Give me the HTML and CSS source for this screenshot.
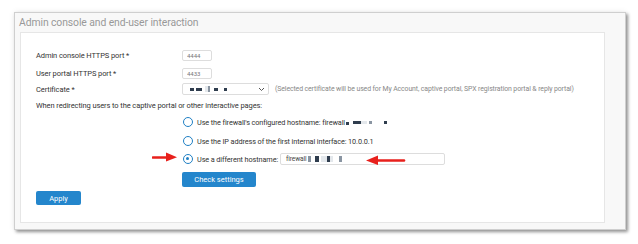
FILE: index.html
```html
<!DOCTYPE html>
<html lang="en">
<head>
  <meta charset="UTF-8" />
  <title>Admin console and end-user interaction</title>
  <link rel="stylesheet" href="styles.css">
</head>
<body>
  <section class="panel">
    <h2 class="panel-title">Admin console and end-user interaction</h2>
    <div class="panel-body">
      <div class="row row-first">
        <label class="label">Admin console HTTPS port *</label>
        <input class="port" type="text" value="4444">
      </div>
      <div class="row row-second">
        <label class="label">User portal HTTPS port *</label>
        <input class="port" type="text" value="4433">
      </div>
      <div class="row row-cert">
        <label class="label">Certificate *</label>
        <div class="select">
          <span class="blk d w4"></span><span class="blk d w6 gap2"></span><span class="blk l w3 gap3 tall"></span><span class="blk m w2 tall"></span><span class="blk d w4 gap4"></span><span class="blk d w3 gap6"></span>
          <svg class="caret" width="7" height="5" viewBox="0 0 7 5"><path d="M1 1l2.5 2.5L6 1" fill="none" stroke="#555" stroke-width="1"/></svg>
        </div>
        <span class="hint">(Selected certificate will be used for My Account, captive portal, SPX registration portal &amp; reply portal)</span>
      </div>
      <p class="note">When redirecting users to the captive portal or other interactive pages:</p>
      <div class="radio-row row-r1">
        <span class="radio"></span>
        <span class="radio-text">Use the firewall's configured hostname: firewall</span>
        <span class="blk d w3 low"></span><span class="blk d w8 gap4"></span><span class="blk l w6"></span><span class="blk m w3 gap2"></span><span class="blk d w3 gap12"></span>
      </div>
      <div class="radio-row row-r2">
        <span class="radio"></span>
        <span class="radio-text">Use the IP address of the first internal interface: 10.0.0.1</span>
      </div>
      <div class="radio-row row-r3">
        <span class="radio checked"></span>
        <span class="radio-text">Use a different hostname:</span>
        <div class="hostname">
          firewall<span class="blk m w3 tall gap1"></span><span class="blk d w4 tall gap4"></span><span class="blk l w6 tall gap2"></span><span class="blk d w3 tall"></span><span class="blk l w3 tall"></span><span class="blk m w3 tall gap6"></span>
        </div>
      </div>
      <button class="btn btn-check">Check settings</button>
      <button class="btn btn-apply">Apply</button>
    </div>
  </section>

  <!-- annotation arrows drawn over the screenshot -->
  <svg class="arrow arrow-left" width="28" height="12" viewBox="0 0 28 12">
    <path d="M1 6.5h15" stroke="#e8201c" stroke-width="2.6" stroke-linecap="round"/>
    <path d="M14 1.5L25 6.2L14 10.5z" fill="#e8201c"/>
  </svg>
  <svg class="arrow arrow-right" width="42" height="12" viewBox="0 0 42 12">
    <path d="M12 6.5h28" stroke="#e8201c" stroke-width="2.6" stroke-linecap="round"/>
    <path d="M14 1.5L2 6.5L14 11z" fill="#e8201c"/>
  </svg>
</body>
</html>
```

FILE: styles.css
```css
body {
  margin: 0;
  background: #fff;
  font-family: Roboto, "Liberation Sans", sans-serif;
  color: #333;
  position: relative;
  width: 638px;
  height: 244px;
  overflow: hidden;
}
.panel {
  box-sizing: border-box;
  margin: 12px 0 0 14px;
  width: 612px;
  height: 218px;
  background: #f8f8f8;
  border: 1px solid #cfcfcf;
  box-shadow: 2px 2px 3px rgba(0, 0, 0, 0.4), 0 0 6px rgba(0, 0, 0, 0.08);
  display: flex;
  flex-direction: column;
}
.panel-title {
  margin: 0;
  height: 19px;
  line-height: 19px;
  padding-left: 4px;
  font-size: 10.4px;
  font-weight: normal;
  color: #999;
  letter-spacing: -0.1px;
}
.panel-body {
  box-sizing: border-box;
  margin: 0 20px 0 5px;
  height: 191px;
  background: #fff;
  border: 1px solid #e6e6e6;
  padding: 16px 0 0 15px;
  display: flex;
  flex-direction: column;
  align-items: flex-start;
  font-size: 7.3px;
  letter-spacing: -0.1px;
}
.row {
  display: flex;
  align-items: center;
  height: 12px;
}
.row-second { margin-top: 6px; }
.row-cert { margin-top: 4px; }
.label {
  width: 146px;
  flex: none;
  font-size: 7.5px;
}
.port {
  box-sizing: border-box;
  width: 30px;
  height: 11px;
  border: 1px solid #ddd;
  border-radius: 2px;
  font: inherit;
  font-size: 6px;
  color: #777;
  padding: 0 0 0 4px;
  outline: none;
}
.select {
  box-sizing: border-box;
  width: 87px;
  height: 12px;
  border: 1px solid #ddd;
  border-radius: 2px;
  display: flex;
  align-items: center;
  padding-left: 7px;
  position: relative;
}
.caret {
  position: absolute;
  right: 3px;
  top: 3px;
}
.hint {
  margin-left: 6px;
  color: #888;
  font-size: 6.9px;
}
.blk {
  display: inline-block;
  height: 3px;
  flex: none;
}
.blk.tall { height: 6px; }
.blk.low { align-self: flex-end; margin-bottom: 3px; }
.d { background: #2f3d4e; }
.m { background: #8a95a2; }
.l { background: #e4e8ec; }
.w2 { width: 2px; }
.w3 { width: 3px; }
.w4 { width: 4px; }
.w6 { width: 6px; }
.w8 { width: 8px; }
.gap1 { margin-left: 1px; }
.gap2 { margin-left: 2px; }
.gap3 { margin-left: 3px; }
.gap4 { margin-left: 4px; }
.gap6 { margin-left: 6px; }
.gap12 { margin-left: 12px; }
.note {
  margin: 5px 0 0;
  height: 12px;
  line-height: 12px;
  font-size: 7.5px;
}
.radio-row {
  display: flex;
  align-items: center;
  height: 12px;
  margin-left: 146px;
}
.row-r1 { margin-top: 4px; }
.row-r2 { margin-top: 7px; }
.row-r3 { margin-top: 6px; }
.radio {
  box-sizing: border-box;
  width: 10px;
  height: 10px;
  border: 1.5px solid #1f7fc4;
  border-radius: 50%;
  margin-left: 1px;
  margin-right: 4px;
  position: relative;
  flex: none;
}
.radio.checked::after {
  content: "";
  position: absolute;
  left: 2px;
  top: 2px;
  width: 3px;
  height: 3px;
  border-radius: 50%;
  background: #1f7fc4;
}
.radio-text {
  margin-right: 2px;
}
.row-r1 .radio-text { margin-right: 1px; }
.hostname {
  box-sizing: border-box;
  width: 165px;
  height: 12px;
  border: 1px solid #ddd;
  border-radius: 2px;
  margin-left: 0;
  padding-left: 5px;
  display: flex;
  align-items: center;
  color: #444;
  font-size: 6.6px;
}
.btn {
  border: none;
  border-radius: 2px;
  background: #2486cc;
  color: #fff;
  font: inherit;
  font-size: 7.5px;
  padding: 0;
  cursor: pointer;
}
.btn-check {
  margin: 7px 0 0 146px;
  width: 74px;
  height: 15px;
}
.btn-apply {
  margin-top: 4px;
  width: 45px;
  height: 14px;
}
.arrow {
  position: absolute;
}
.arrow-left {
  left: 152px;
  top: 151px;
}
.arrow-right {
  left: 364px;
  top: 154px;
}
```
